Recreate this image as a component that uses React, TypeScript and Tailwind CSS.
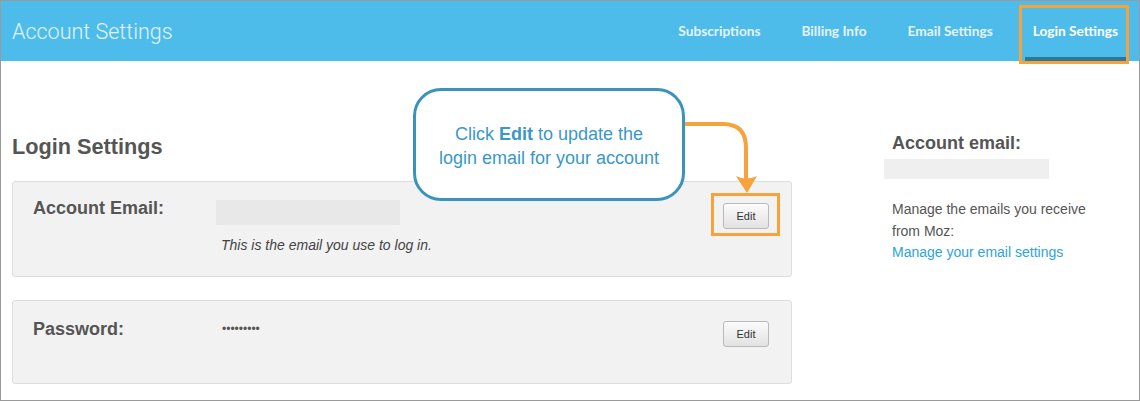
import React from "react";

const sans = { fontFamily: '"Liberation Sans", Arial, sans-serif' };

function EditButton() {
  return (
    <button
      className="w-[46px] h-[26px] shrink-0 rounded-[3px] border border-[#b9b9b9] bg-gradient-to-b from-[#fbfbfb] to-[#e2e2e2] text-[11px] text-[#333] shadow-[inset_0_1px_0_#fff]"
      style={sans}
    >
      Edit
    </button>
  );
}

export default function App() {
  return (
    <div
      className="relative w-[1140px] h-[401px] border border-[#9a9a9a] bg-white overflow-hidden"
      style={sans}
    >
      {/* Header */}
      <header className="h-[60px] bg-[#4ebcea] flex items-center justify-between pl-[11px] pr-[11px]">
        <h1
          className="text-[21.5px] font-light text-[#e2f3fc] leading-none pt-[2px]"
          style={{ fontFamily: 'Roboto, "Liberation Sans", sans-serif' }}
        >
          Account Settings
        </h1>
        <nav
          className="flex h-full gap-[23px] text-[13.7px] font-bold"
          style={{ fontFamily: 'Lato, "Liberation Sans", sans-serif' }}
        >
          <a className="h-full flex items-center px-[9px] text-[#e4f3fb]">Subscriptions</a>
          <a className="h-full flex items-center px-[9px] text-[#e4f3fb]">Billing Info</a>
          <a className="h-full flex items-center px-[9px] text-[#e4f3fb]">Email Settings</a>
          <a className="relative h-full flex items-center pl-[8px] pr-[10px] text-white">
            Login Settings
            <span className="absolute left-0 right-0 bottom-0 h-[4px] bg-[#2e7896]" />
          </a>
        </nav>
      </header>

      {/* Body */}
      <div className="flex px-[11px]">
        {/* Main column */}
        <main className="w-[780px] shrink-0 pt-[72px]">
          <h2 className="text-[21.7px] leading-[28px] font-bold text-[#555]">Login Settings</h2>

          <section className="mt-[20px] h-[96px] rounded-[3px] border border-[#dedede] bg-[#f2f2f2] pl-[20px] pr-[22px] pt-[14px] flex items-start">
            <div className="w-[188px] shrink-0 text-[18px] leading-[24px] font-bold text-[#555]">
              Account Email:
            </div>
            <div className="flex-1">
              <div className="mt-[4px] -ml-[5px] h-[25px] w-[184px] rounded-[2px] bg-[#e8e8e8] blur-[0.6px]" />
              <p className="mt-[10px] text-[14px] leading-[20px] italic text-[#444]">
                This is the email you use to log in.
              </p>
            </div>
            <div className="mt-[7px]">
              <EditButton />
            </div>
          </section>

          <section className="mt-[23px] h-[84px] rounded-[3px] border border-[#dedede] bg-[#f2f2f2] pl-[20px] pr-[22px] pt-[16px] flex items-start">
            <div className="w-[188px] shrink-0 text-[18px] leading-[24px] font-bold text-[#555]">
              Password:
            </div>
            <div className="flex-1 text-[12px] leading-[24px] text-[#555] pl-[1px]">•••••••••</div>
            <div className="mt-[4px]">
              <EditButton />
            </div>
          </section>
        </main>

        {/* Sidebar */}
        <aside className="ml-[100px] w-[230px] pt-[70px]">
          <h3 className="text-[18px] leading-[24px] font-bold text-[#555]">Account email:</h3>
          <div className="mt-[4px] -ml-[8px] h-[20px] w-[165px] bg-[#efefef] blur-[0.6px]" />
          <p className="mt-[20px] text-[14px] leading-[21.5px] text-[#555]">
            Manage the emails you receive
            <br />
            from Moz:
          </p>
          <a className="block text-[14px] leading-[21.5px] text-[#2ea3dc]">Manage your email settings</a>
        </aside>
      </div>

      {/* Overlays: annotation */}
      <div className="absolute left-[1018px] top-[4px] w-[110px] h-[59px] border-[3px] border-[#f7a23b]" />

      <svg
        className="absolute left-0 top-0 pointer-events-none"
        width="1140"
        height="401"
        viewBox="0 0 1140 401"
      >
        <path
          d="M676 123 H722 Q745 123 745 147 V180"
          fill="none"
          stroke="#f7a23b"
          strokeWidth="4"
        />
        <path d="M735 175 Q745 180 756 175 L746 192 Z" fill="#f7a23b" />
      </svg>

      <div className="absolute left-[412px] top-[87px] w-[272px] h-[113px] rounded-[28px] border-[3px] border-[#3a92bf] bg-white flex items-center justify-center pt-[3px]">
        <p className="text-center text-[18px] leading-[24px] text-[#3a98c8]">
          Click <b>Edit</b> to update the
          <br />
          login email for your account
        </p>
      </div>

      <div className="absolute left-[710px] top-[192px] w-[69px] h-[43px] border-[3px] border-[#f7a23b]" />
    </div>
  );
}
